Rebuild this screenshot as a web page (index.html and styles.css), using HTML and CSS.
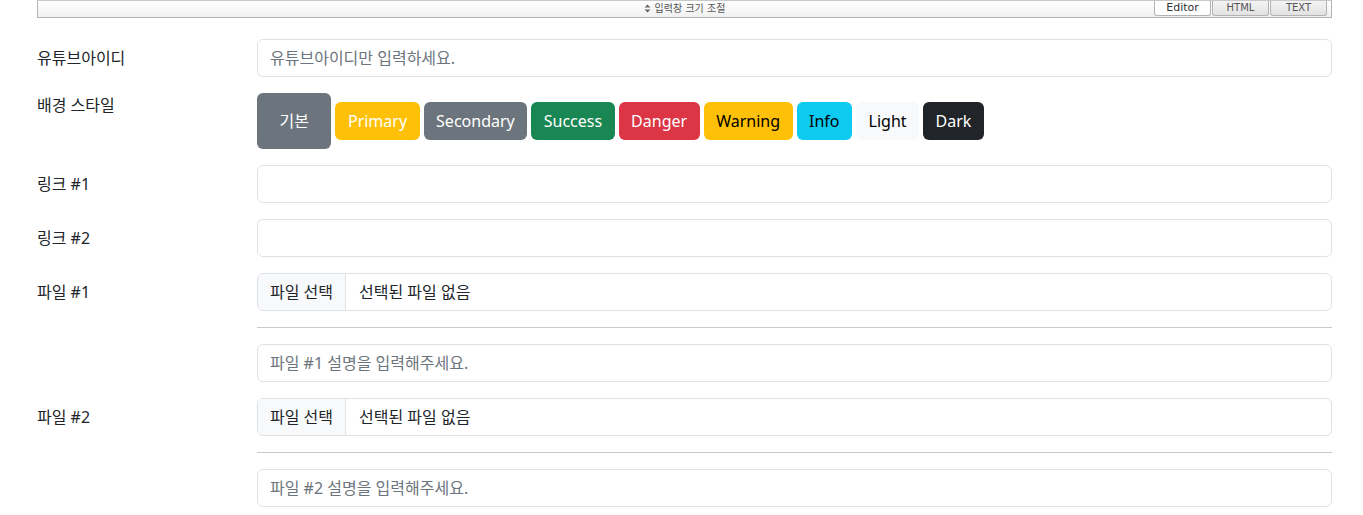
FILE: index.html
```html
<!DOCTYPE html>
<html lang="ko">
<head>
    <meta charset="UTF-8">
    <title>글쓰기</title>
    <link rel="stylesheet" href="styles.css">
</head>
<body>
    <div class="page">
        <div class="editor-bar">
            <span></span>
            <div class="resize">
                <svg width="7" height="9" viewBox="0 0 7 9"><path d="M3.5 0.5L6.5 3.5H0.5Z M3.5 8.5L0.5 5.5H6.5Z" fill="#666"/></svg>
                입력창 크기 조절
            </div>
            <div class="modes">
                <div class="mode active">Editor</div>
                <div class="mode">HTML</div>
                <div class="mode">TEXT</div>
            </div>
        </div>

        <div class="form">
            <label class="form-label">유튜브아이디</label>
            <div class="field">
                <input class="input" type="text" placeholder="유튜브아이디만 입력하세요.">
            </div>

            <label class="form-label label-top">배경 스타일</label>
            <div class="field styles">
                <button class="btn btn-default">기본</button>
                <button class="btn btn-primary">Primary</button>
                <button class="btn btn-secondary">Secondary</button>
                <button class="btn btn-success">Success</button>
                <button class="btn btn-danger">Danger</button>
                <button class="btn btn-warning">Warning</button>
                <button class="btn btn-info">Info</button>
                <button class="btn btn-light">Light</button>
                <button class="btn btn-dark">Dark</button>
            </div>

            <label class="form-label">링크 #1</label>
            <div class="field">
                <input class="input" type="text">
            </div>

            <label class="form-label">링크 #2</label>
            <div class="field">
                <input class="input" type="text">
            </div>

            <label class="form-label">파일 #1</label>
            <div class="field">
                <div class="file">
                    <span class="file-btn">파일 선택</span>
                    <span class="file-name">선택된 파일 없음</span>
                </div>
                <hr class="divider">
                <input class="input" type="text" placeholder="파일 #1 설명을 입력해주세요.">
            </div>

            <label class="form-label">파일 #2</label>
            <div class="field">
                <div class="file">
                    <span class="file-btn">파일 선택</span>
                    <span class="file-name">선택된 파일 없음</span>
                </div>
                <hr class="divider">
                <input class="input" type="text" placeholder="파일 #2 설명을 입력해주세요.">
            </div>
        </div>
    </div>
</body>
</html>
```

FILE: styles.css
```css
body {
    margin: 0;
    font-family: "Noto Sans", "Noto Sans CJK KR", sans-serif;
    color: #212529;
    background: #fff;
}
.page {
    width: 1295px;
    margin-left: 37px;
}
.editor-bar {
    display: grid;
    grid-template-columns: 1fr auto 1fr;
    align-items: start;
    border: 1px solid #b3b3b3;
    border-top-color: #c8c8c8;
    background: linear-gradient(#fff, #f0f0f0);
    box-sizing: border-box;
    height: 18px;
}
.resize {
    display: flex;
    align-items: center;
    gap: 4px;
    font-family: "DejaVu Sans", "Noto Sans CJK KR", sans-serif;
    font-size: 10px;
    color: #555;
    line-height: 15px;
}
.modes {
    display: flex;
    justify-content: flex-end;
    padding-right: 4px;
}
.mode {
    width: 57px;
    height: 15px;
    box-sizing: border-box;
    border: 1px solid #b3b3b3;
    border-top: none;
    border-radius: 0 0 3px 3px;
    background: linear-gradient(#f4f4f4, #e2e2e2);
    font-family: "DejaVu Sans", sans-serif;
    font-size: 10px;
    line-height: 13px;
    text-align: center;
    color: #555;
}
.mode + .mode {
    margin-left: 1px;
}
.mode.active {
    background: #fff;
    color: #333;
    font-size: 11px;
}
.form {
    display: grid;
    grid-template-columns: 220px 1fr;
    row-gap: 16px;
    margin-top: 21px;
}
.form-label {
    padding-top: 7px;
    font-size: 16px;
    line-height: 24px;
}
.form-label.label-top {
    padding-top: 0;
}
.field {
    display: flex;
    flex-direction: column;
}
.input {
    height: 38px;
    box-sizing: border-box;
    padding: 6px 12px;
    border: 1px solid #dee2e6;
    border-radius: 6px;
    font-family: inherit;
    font-size: 16px;
    color: #212529;
    background: #fff;
}
.input::placeholder {
    color: #6c757d;
}
.styles {
    flex-direction: row;
    align-items: center;
    gap: 4px;
}
.btn {
    height: 38px;
    padding: 0 11.5px;
    border: 1px solid transparent;
    border-radius: 6px;
    font-family: inherit;
    font-size: 16px;
    line-height: 24px;
    color: #fff;
    cursor: pointer;
}
.btn-default {
    height: 56px;
    padding: 0 21.5px;
    background: #6c757d;
}
.btn-primary { background: #ffc107; }
.btn-secondary { background: #6c757d; }
.btn-success { background: #198754; }
.btn-danger { background: #dc3545; }
.btn-warning { background: #ffc107; color: #000; }
.btn-info { background: #0dcaf0; color: #000; }
.btn-light { background: #f8f9fa; color: #000; }
.btn-dark { background: #212529; }
.file {
    display: flex;
    height: 38px;
    box-sizing: border-box;
    border: 1px solid #dee2e6;
    border-radius: 6px;
    overflow: hidden;
    font-size: 16px;
    line-height: 36px;
}
.file-btn {
    padding: 0 12px;
    background: #f8f9fa;
    border-right: 1px solid #dee2e6;
}
.file-name {
    padding: 0 13px;
}
.divider {
    margin: 16px 0;
    border: none;
    border-top: 1px solid #c8c9ca;
}
```
